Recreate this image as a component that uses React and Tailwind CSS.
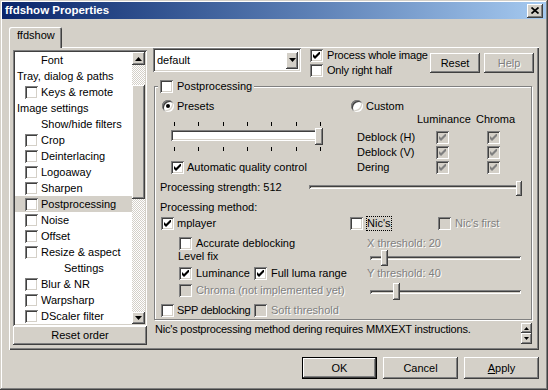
import React from 'react';

const RAISED = 'shadow-[inset_-1px_-1px_0_#404040,inset_1px_1px_0_#fff,inset_-2px_-2px_0_#808080,inset_2px_2px_0_#d4d0c8]';
const SUNKEN = 'shadow-[inset_1px_1px_0_#808080,inset_-1px_-1px_0_#fff,inset_2px_2px_0_#404040,inset_-2px_-2px_0_#d4d0c8]';
const DIM = 'text-[#808080] [text-shadow:1px_1px_0_#fff]';

const Check = ({ on, off }) => (
  <span className={`flex h-[13px] w-[13px] shrink-0 items-center justify-center ${SUNKEN} ${off ? 'bg-[#d4d0c8]' : 'bg-white'}`}>
    {on && (
      <svg width="7" height="7" viewBox="0 0 7 7">
        <path d="M0 2 L2 4 L6 0 L7 0 L7 2 L2 7 L0 5 Z" fill={off ? '#808080' : '#000'} />
      </svg>
    )}
  </span>
);

const Radio = ({ on }) => (
  <span className={`flex h-[12px] w-[12px] shrink-0 items-center justify-center rounded-full bg-white ${SUNKEN}`}>
    {on && <span className="h-[4px] w-[4px] rounded-full bg-black" />}
  </span>
);

const Btn = ({ children, className = '' }) => (
  <div className={`flex shrink-0 items-center justify-center bg-[#d4d0c8] ${RAISED} ${className}`}>{children}</div>
);

const Tri = ({ down, small }) => (
  <svg width={small ? 5 : 7} height={small ? 3 : 4} viewBox="0 0 7 4" preserveAspectRatio="none">
    <path d={down ? 'M0 0h7L3.5 4z' : 'M0 4h7L3.5 0z'} fill="#000" />
  </svg>
);

const Ticks = ({ className }) => (
  <div className={`ml-[4px] flex h-[4px] w-[147px] justify-between ${className}`}>
    {[0, 1, 2, 3, 4, 5, 6].map((i) => (
      <span key={i} className="h-full w-px bg-black" />
    ))}
  </div>
);

const filters = [
  { t: 'Font', cls: 'pl-[26px]' },
  { t: 'Tray, dialog & paths', cls: 'pl-[2px]' },
  { t: 'Keys & remote', box: true },
  { t: 'Image settings', cls: 'pl-[2px]' },
  { t: 'Show/hide filters', cls: 'pl-[26px]' },
  { t: 'Crop', box: true },
  { t: 'Deinterlacing', box: true },
  { t: 'Logoaway', box: true },
  { t: 'Sharpen', box: true },
  { t: 'Postprocessing', box: true, sel: true },
  { t: 'Noise', box: true },
  { t: 'Offset', box: true },
  { t: 'Resize & aspect', box: true },
  { t: 'Settings', cls: 'pl-[49px]' },
  { t: 'Blur & NR', box: true },
  { t: 'Warpsharp', box: true },
  { t: 'DScaler filter', box: true },
];

const FilterList = () => (
  <div className="flex w-[134px] flex-col">
    <div className={`flex h-[276px] bg-white p-[2px] ${SUNKEN}`}>
      <div className="flex w-[117px] flex-col">
        {filters.map((f) => (
          <div
            key={f.t}
            className={`flex h-[16px] items-center ${f.sel ? 'bg-[#d4d0c8]' : ''} ${f.box ? 'pl-[10px]' : f.cls}`}
          >
            {f.box && <Check />}
            <span className={f.box ? 'ml-[3px]' : ''}>{f.t}</span>
          </div>
        ))}
      </div>
      <div className="flex w-[13px] flex-col">
        <Btn className="h-[13px] w-[13px]"><Tri /></Btn>
        <div className="flex flex-1 flex-col bg-[repeating-conic-gradient(#d4d0c8_0_25%,#fff_0_50%)] bg-[length:2px_2px]">
          <div className={`mt-[20px] h-[114px] bg-[#d4d0c8] ${RAISED}`} />
        </div>
        <Btn className="h-[12px] w-[13px]"><Tri down /></Btn>
      </div>
    </div>
    <Btn className="h-[19px] w-[134px]">Reset order</Btn>
  </div>
);

const TopRow = () => (
  <div className="flex h-[38px]">
    <div className={`flex h-[24px] w-[148px] items-center bg-white pl-[4px] pr-[3px] ${SUNKEN}`}>
      <span>default</span>
      <Btn className="ml-auto h-[17px] w-[12px]"><Tri down /></Btn>
    </div>
    <div className="ml-[9px] flex flex-col tracking-[-0.2px]">
      <div className="flex h-[15px] items-center">
        <Check on />
        <span className="ml-[4px]">Process whole image</span>
      </div>
      <div className="flex h-[15px] items-center">
        <Check />
        <span className="ml-[4px]">Only right half</span>
      </div>
    </div>
    <Btn className="ml-auto mt-[5px] h-[20px] w-[50px]">Reset</Btn>
    <Btn className={`ml-[4px] mt-[5px] h-[20px] w-[50px] ${DIM}`}>Help</Btn>
  </div>
);

const Postprocessing = () => (
  <div className="ml-[1px] flex w-[378px] flex-col border border-[#808080] pb-[2px] pl-[6px] shadow-[inset_1px_1px_0_#fff,1px_1px_0_#fff]">
    <div className="-mt-[7px] -ml-[3px] flex h-[13px] w-fit items-center bg-[#d4d0c8] px-[2px]">
      <Check />
      <span className="ml-[4px]">Postprocessing</span>
    </div>

    <div className="mt-[6px] flex">
      <div className="flex w-[189px] flex-col">
        <div className="flex h-[14px] items-center">
          <span className="ml-[1px]"><Radio on /></span>
          <span className="ml-[3px]">Presets</span>
        </div>
        <div className="ml-[9px] mt-[9px] flex flex-col">
          <Ticks />
          <div className={`relative ml-[1px] mt-[4px] h-[11px] w-[146px] bg-white ${SUNKEN}`}>
            <div className={`absolute -top-[2px] left-[144px] h-[17px] w-[8px] bg-[#d4d0c8] ${RAISED}`} />
          </div>
          <Ticks className="mt-[6px]" />
        </div>
        <div className="ml-[10px] mt-[9px] flex h-[14px] items-center">
          <Check on />
          <span className="ml-[3px]">Automatic quality control</span>
        </div>
      </div>

      <div className="flex flex-col">
        <div className="flex h-[14px] items-center">
          <span className="ml-[1px]"><Radio /></span>
          <span className="ml-[3px]">Custom</span>
        </div>
        <div className="flex h-[12px] items-center">
          <span className="ml-[67px] w-[59px]">Luminance</span>
          <span>Chroma</span>
        </div>
        <div className="mt-[5px] flex flex-col">
          {['Deblock (H)', 'Deblock (V)', 'Dering'].map((l) => (
            <div key={l} className="flex h-[15px] items-center">
              <span className="ml-[7px] w-[79px]">{l}</span>
              <Check on off />
              <span className="ml-[38px]"><Check on off /></span>
            </div>
          ))}
        </div>
      </div>
    </div>

    <div className="mt-[5px] flex h-[14px] items-center">
      <span className="-ml-[1px]">Processing strength: 512</span>
      <div className="relative ml-auto mr-[8px] flex h-[14px] w-[214px] items-center">
        <div className={`h-[4px] w-[211px] ${SUNKEN}`} />
        <div className={`absolute right-[1px] top-[1px] h-[15px] w-[6px] bg-[#d4d0c8] ${RAISED}`} />
      </div>
    </div>

    <div className="mt-[6px] flex h-[14px] items-center">
      <span className="-ml-[1px]">Processing method:</span>
    </div>

    <div className="mt-[2px] flex">
      <div className="flex w-[189px] flex-col">
        <div className="flex h-[14px] items-center">
          <Check on />
          <span className="ml-[3px]">mplayer</span>
        </div>
        <div className="ml-[18px] mt-[6px] flex h-[14px] items-center">
          <Check />
          <span className="ml-[4px]">Accurate deblocking</span>
        </div>
        <div className="ml-[17px] flex h-[12px] items-center">Level fix</div>
        <div className="ml-[18px] mt-[4px] flex h-[14px] items-center">
          <div className="flex w-[75px] items-center">
            <Check on />
            <span className="ml-[4px]">Luminance</span>
          </div>
          <Check on />
          <span className="ml-[4px]">Full luma range</span>
        </div>
        <div className="ml-[18px] mt-[3px] flex h-[14px] items-center">
          <Check off />
          <span className={`ml-[4px] ${DIM}`}>Chroma (not implemented yet)</span>
        </div>
        <div className="mt-[6px] flex h-[14px] items-center">
          <div className="flex w-[93px] items-center">
            <Check />
            <span className="ml-[3px] tracking-[-0.3px]">SPP deblocking</span>
          </div>
          <Check off />
          <span className={`ml-[4px] ${DIM}`}>Soft threshold</span>
        </div>
      </div>

      <div className="flex flex-col">
        <div className="flex h-[14px] items-center">
          <div className="flex w-[88px] items-center">
            <Check />
            <span className="ml-[4px] outline-1 outline-dotted outline-black">Nic's</span>
          </div>
          <Check off />
          <span className={`ml-[4px] ${DIM}`}>Nic's first</span>
        </div>
        <div className={`ml-[17px] mt-[6px] flex h-[14px] items-center ${DIM}`}>X threshold: 20</div>
        <div className="relative ml-[20px] flex h-[16px] w-[151px] items-center">
          <div className={`h-[4px] w-full ${SUNKEN}`} />
          <div className={`absolute left-[11px] top-0 h-[16px] w-[7px] bg-[#d4d0c8] ${RAISED}`} />
        </div>
        <div className={`ml-[17px] flex h-[14px] items-center ${DIM}`}>Y threshold: 40</div>
        <div className="relative ml-[20px] mt-[3px] flex h-[17px] w-[151px] items-center">
          <div className={`h-[4px] w-full ${SUNKEN}`} />
          <div className={`absolute left-[23px] top-0 h-[17px] w-[7px] bg-[#d4d0c8] ${RAISED}`} />
        </div>
      </div>
    </div>
  </div>
);

export default function App() {
  return (
    <div className="h-[390px] w-[548px] overflow-hidden whitespace-nowrap bg-[#d4d0c8] p-[2px] text-[11px] leading-[13px] text-black shadow-[inset_-1px_-1px_0_#404040,inset_1px_1px_0_#d4d0c8,inset_-2px_-2px_0_#808080,inset_2px_2px_0_#fff] [font-family:'Liberation_Sans',Arial,sans-serif]">
      <div className="flex h-[17px] items-center justify-between bg-linear-to-r from-[#0a246a] to-[#a6caf0] pl-[3px] pr-[3px]">
        <span className="text-[11.5px] font-bold text-white">ffdshow Properties</span>
        <Btn className="h-[14px] w-[16px]">
          <svg width="8" height="7" viewBox="0 0 8 7">
            <path d="M0.5 0.5 L7.5 6.5 M7.5 0.5 L0.5 6.5" stroke="#000" strokeWidth="1.7" />
          </svg>
        </Btn>
      </div>

      <div className="relative z-10 ml-[7px] mt-[8px] flex h-[21px] w-[53px] items-start rounded-t-[2px] bg-[#d4d0c8] pl-[8px] pt-[2px] shadow-[inset_1px_1px_0_#fff,inset_-1px_0_0_#404040,inset_-2px_0_0_#808080]">
        ffdshow
      </div>

      <div className="-mt-[1px] ml-[7px] flex h-[303px] w-[530px] pl-[4px] pt-[3px] shadow-[inset_1px_1px_0_#fff,inset_-1px_-1px_0_#404040,inset_-2px_-2px_0_#808080]">
        <FilterList />
        <div className="-mt-[2px] ml-[6px] flex w-[381px] flex-col">
          <TopRow />
          <Postprocessing />
          <div className="mt-[2px] flex h-[24px]">
            <span className="pl-[2px] pt-[1px] tracking-[-0.2px]">Nic's postprocessing method dering requires MMXEXT instructions.</span>
            <div className="ml-auto mr-[2px] mt-[1px] flex flex-col">
              <Btn className="h-[10px] w-[11px]"><Tri small /></Btn>
              <Btn className="h-[11px] w-[11px]"><Tri small down /></Btn>
            </div>
          </div>
        </div>
      </div>

      <div className="mt-[7px] flex justify-end gap-[6px] pr-[7px]">
        <div className="h-[22px] w-[75px] border border-black">
          <Btn className="h-full w-full">OK</Btn>
        </div>
        <Btn className="h-[22px] w-[75px]">Cancel</Btn>
        <Btn className="h-[22px] w-[75px]">
          <span><span className="underline">A</span>pply</span>
        </Btn>
      </div>
    </div>
  );
}
